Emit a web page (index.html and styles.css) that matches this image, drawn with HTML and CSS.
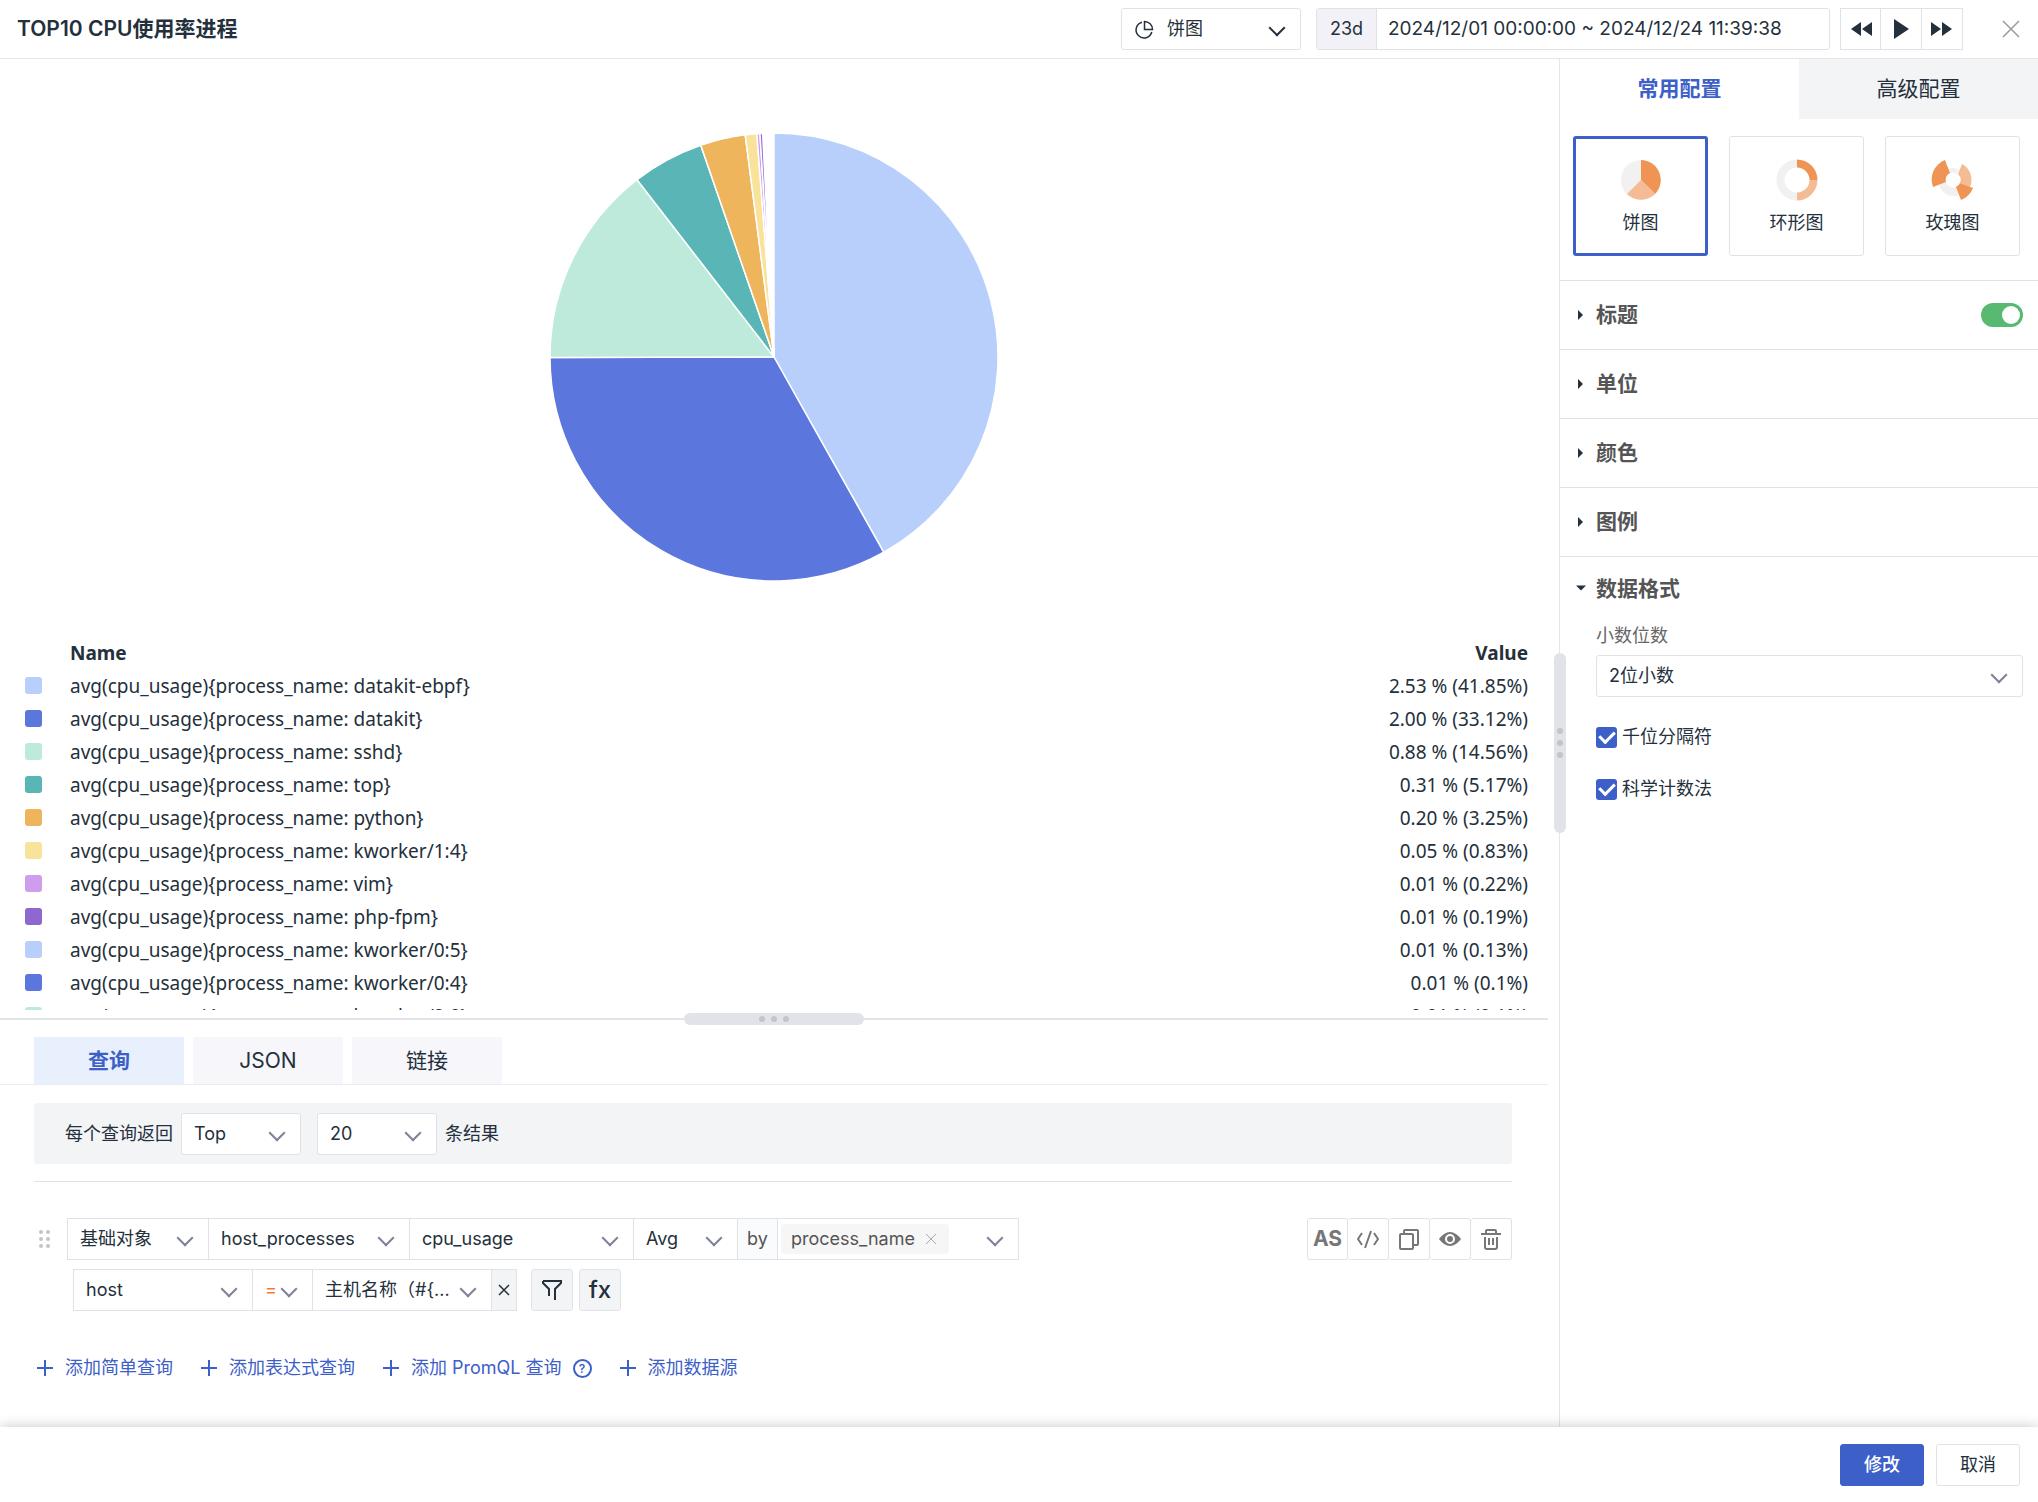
FILE: index.html
```html
<!doctype html>
<html lang="zh-CN">

<head>
    <meta charset="UTF-8" />
    <meta name="viewport" content="width=device-width, initial-scale=1.0" />
    <title>TOP10 CPU使用率进程</title>
    <link rel="stylesheet" href="styles.css">
</head>

<body>

    <header class="header">
        <h1>TOP10 CPU使用率进程</h1>
        <div class="select chart-select">
            <svg class="chart-icon" viewBox="0 0 20 20" width="20" height="20">
                <path d="M8 2.200a8 8 0 1 0 9.800 9.800M10.500 1.500v8h8a8 8 0 0 0-8-8z" />
            </svg>
            <select aria-label="图表类型">
                <option>饼图</option>
            </select>
        </div>
        <div class="time-range">
            <span>23d</span>
            <input type="text" aria-label="时间范围" value="2024/12/01 00:00:00 ~ 2024/12/24 11:39:38">
        </div>
        <div class="player">
            <button aria-label="后退"><svg viewBox="0 0 22 20" width="22" height="20"><path d="M11 3v14L1 10zM22 3v14l-10-7z" /></svg></button>
            <button aria-label="播放"><svg viewBox="0 0 22 20" width="22" height="20"><path d="M4 0l15 10L4 20z" /></svg></button>
            <button aria-label="前进"><svg viewBox="0 0 22 20" width="22" height="20"><path d="M0 3l10 7-10 7zM11 3l10 7-10 7z" /></svg></button>
        </div>
        <button class="close" aria-label="关闭"><svg viewBox="0 0 18 18" width="18" height="18"><path d="M1 1l16 16M17 1L1 17" /></svg></button>
    </header>

    <main class="main">
        <section class="left">
            <div class="chart">
                <svg id="pie" viewBox="-224 -224 448 448" width="448" height="448"></svg>
            </div>
            <div class="legend">
                <table>
                    <thead>
                        <tr><th></th><th>Name</th><th class="value">Value</th></tr>
                    </thead>
                    <tbody id="legend"></tbody>
                </table>
            </div>
            <div class="splitter">
                <div class="handle"><i></i><i></i><i></i></div>
            </div>

            <div class="tabs">
                <button class="active">查询</button>
                <button>JSON</button>
                <button>链接</button>
            </div>

            <div class="editor">
                <div class="limit">
                    <label for="order">每个查询返回</label>
                    <div class="select">
                        <select id="order"><option>Top</option><option>Bottom</option></select>
                    </div>
                    <div class="select">
                        <select id="count" aria-label="数量"><option>20</option><option>50</option></select>
                    </div>
                    <label for="count">条结果</label>
                </div>

                <div class="query">
                    <svg class="drag" viewBox="0 0 12 18" width="12" height="18">
                        <circle cx="2" cy="2" r="2" /><circle cx="9" cy="2" r="2" />
                        <circle cx="2" cy="9" r="2" /><circle cx="9" cy="9" r="2" />
                        <circle cx="2" cy="16" r="2" /><circle cx="9" cy="16" r="2" />
                    </svg>
                    <div class="group">
                        <div class="select source"><select aria-label="数据源"><option>基础对象</option></select></div>
                        <div class="select class-name"><select aria-label="分类"><option>host_processes</option></select></div>
                        <div class="select field"><select aria-label="字段"><option>cpu_usage</option></select></div>
                        <div class="select func"><select aria-label="函数"><option>Avg</option></select></div>
                        <span class="by">by</span>
                        <div class="select group-by">
                            <span class="tag">process_name
                                <button aria-label="移除"><svg viewBox="0 0 12 12" width="12" height="12"><path d="M1 1l10 10M11 1L1 11" /></svg></button>
                            </span>
                        </div>
                    </div>
                    <div class="tools">
                        <button class="as">AS</button>
                        <button aria-label="代码"><svg viewBox="0 0 24 24" width="24" height="24"><path d="M6 6l-4 6 4 6M18 6l4 6-4 6M15 4L9 21" /></svg></button>
                        <button aria-label="复制"><svg viewBox="0 0 24 24" width="24" height="24"><path d="M4 7h11a1 1 0 0 1 1 1v13a1 1 0 0 1-1 1H4a1 1 0 0 1-1-1V8a1 1 0 0 1 1-1zM7 7V4a1 1 0 0 1 1-1h12a1 1 0 0 1 1 1v13a1 1 0 0 1-1 1h-4" /></svg></button>
                        <button aria-label="隐藏"><svg viewBox="0 0 24 24" width="24" height="24"><path class="solid" d="M1 12c3-4 7-7 11-7s8 3 11 7c-3 4-7 7-11 7s-8-3-11-7z" /><circle class="ring" cx="12" cy="12" r="4" /></svg></button>
                        <button aria-label="删除"><svg viewBox="0 0 24 24" width="24" height="24"><path d="M2 7h20M7 7V4a1 1 0 0 1 1-1h8a1 1 0 0 1 1 1v3M6 10v10a2 2 0 0 0 2 2h8a2 2 0 0 0 2-2V10M10 11v7M14 11v7" /></svg></button>
                    </div>
                </div>

                <div class="filter">
                    <div class="group">
                        <div class="select key"><select aria-label="字段名"><option>host</option></select></div>
                        <div class="select operator"><select aria-label="运算符"><option>=</option><option>!=</option></select></div>
                        <div class="select val"><select aria-label="字段值"><option>主机名称（#{...</option></select></div>
                        <button class="remove" aria-label="移除条件"><svg viewBox="0 0 12 12" width="12" height="12"><path d="M1 1l10 10M11 1L1 11" /></svg></button>
                    </div>
                    <button class="square" aria-label="筛选"><svg viewBox="0 0 22 22" width="22" height="22"><path d="M2 2h18v2l-6 6v11M8 17v-7L2 4V2" /></svg></button>
                    <button class="square">fx</button>
                </div>

                <div class="adds">
                    <button><svg viewBox="0 0 18 18" width="18" height="18"><path d="M9 1v16M1 9h16" /></svg>添加简单查询</button>
                    <button><svg viewBox="0 0 18 18" width="18" height="18"><path d="M9 1v16M1 9h16" /></svg>添加表达式查询</button>
                    <button><svg viewBox="0 0 18 18" width="18" height="18"><path d="M9 1v16M1 9h16" /></svg>添加 PromQL 查询<span class="help">?</span></button>
                    <button><svg viewBox="0 0 18 18" width="18" height="18"><path d="M9 1v16M1 9h16" /></svg>添加数据源</button>
                </div>
            </div>
        </section>

        <aside class="right">
            <div class="handle vertical"><i></i><i></i><i></i></div>
            <div class="config-tabs">
                <button class="active">常用配置</button>
                <button>高级配置</button>
            </div>
            <div class="types">
                <button class="active">
                    <svg viewBox="-22 -22 44 44" width="44" height="44">
                        <circle r="20" fill="#f1f1f1" />
                        <path d="M0 0V-20A20 20 0 0 1 14 14z" fill="#ef9454" />
                        <path d="M0 0L14 14A20 20 0 0 1-14 14z" fill="#f5bb94" />
                    </svg>
                    饼图
                </button>
                <button>
                    <svg viewBox="-22 -22 44 44" width="44" height="44">
                        <path d="M0-20.500A20.500 20.500 0 0 0 0 20.500V12.500A12.500 12.500 0 0 1 0-12.500z" fill="#f1f1f1" />
                        <path d="M0-20.500A20.500 20.500 0 0 1 20.500 0H12.500A12.500 12.500 0 0 0 0-12.500z" fill="#ef9454" />
                        <path d="M20.500 0A20.500 20.500 0 0 1 0 20.500V12.500A12.500 12.500 0 0 0 12.500 0z" fill="#f5bb94" />
                    </svg>
                    环形图
                </button>
                <button>
                    <svg viewBox="-22 -22 44 44" width="44" height="44">
                        <path d="M-5-11A12 12 0 0 1 6-10L4-6A7 7 0 0 0-3-7z" fill="#f1f1f1" />
                        <path d="M-14 5A15 15 0 0 0 6 15L3 7A8 8 0 0 1-7 2z" fill="#f1f1f1" />
                        <path d="M-8-20A21 21 0 0 0-20 7L-7 2A8 8 0 0 1-3-7z" fill="#ef9454" />
                        <path d="M9-16A18 18 0 0 1 17 7L7 3A8 8 0 0 0 5-6z" fill="#f5bb94" />
                        <path d="M20 8A21 21 0 0 1 8 20L3 7A8 8 0 0 0 7 3z" fill="#ef9454" />
                    </svg>
                    玫瑰图
                </button>
            </div>

            <div class="fold">
                <h2>标题</h2>
                <input type="checkbox" class="toggle" aria-label="显示标题" checked>
            </div>
            <div class="fold"><h2>单位</h2></div>
            <div class="fold"><h2>颜色</h2></div>
            <div class="fold"><h2>图例</h2></div>
            <div class="fold open"><h2>数据格式</h2></div>
            <div class="format">
                <label class="format-label" for="decimals">小数位数</label>
                <div class="select">
                    <select id="decimals"><option>2位小数</option></select>
                </div>
                <label class="check"><input type="checkbox" checked>千位分隔符</label>
                <label class="check"><input type="checkbox" checked>科学计数法</label>
            </div>
        </aside>
    </main>

    <footer class="footer">
        <button class="primary">修改</button>
        <button>取消</button>
    </footer>

    <script>
        const colors = ["#b8cefb", "#5b76dd", "#bdeadb", "#5ab5b6", "#eeb55c", "#f9e29a", "#cf9cee", "#8e67d1"];

        // [process, value, percent]
        const rows = [
            ["datakit-ebpf", "2.53", 41.85],
            ["datakit", "2.00", 33.12],
            ["sshd", "0.88", 14.56],
            ["top", "0.31", 5.17],
            ["python", "0.20", 3.25],
            ["kworker/1:4", "0.05", 0.83],
            ["vim", "0.01", 0.22],
            ["php-fpm", "0.01", 0.19],
            ["kworker/0:5", "0.01", 0.13],
            ["kworker/0:4", "0.01", 0.1],
            ["kworker/2:0", "0.01", 0.1]
        ];

        const legend = document.getElementById("legend");
        const pie = document.getElementById("pie");
        const r = 224;
        let angle = 0;

        rows.forEach(function (row, i) {
            const color = colors[i % colors.length];
            legend.insertAdjacentHTML("beforeend", `<tr><td><span class="swatch" style="background: ${color}"></span></td><td>avg(cpu_usage){process_name: ${row[0]}}</td><td class="value">${row[1]} % (${row[2]}%)</td></tr>`);

            const end = angle + row[2] / 100 * Math.PI * 2;
            // slices thinner than the white border are not visible
            if (row[2] > 0.15) {
                const x1 = r * Math.sin(angle), y1 = -r * Math.cos(angle);
                const x2 = r * Math.sin(end), y2 = -r * Math.cos(end);
                pie.insertAdjacentHTML("beforeend", `<path d="M0 0L${x1} ${y1}A${r} ${r} 0 0 1 ${x2} ${y2}z" fill="${color}" />`);
            }
            angle = end;
        });
    </script>
</body>

</html>
```
FILE: styles.css
```css
* {
    box-sizing: border-box;
}

body {
    margin: 0;
    height: 100vh;
    display: flex;
    flex-direction: column;
    background: #fff;
    color: #24303b;
    font-family: Inter, "Noto Sans CJK SC", sans-serif;
    font-size: 18px;
    line-height: 24px;
}

button,
input,
select {
    margin: 0;
    font: inherit;
    color: inherit;
}

button {
    display: flex;
    align-items: center;
    justify-content: center;
    padding: 0;
    border: 1px solid #e1e2e7;
    border-radius: 3px;
    background: #fff;
    cursor: pointer;
}

svg {
    display: block;
    flex: none;
}

/* select with a chevron */
.select {
    position: relative;
    height: 42px;
    border: 1px solid #e1e2e7;
    border-radius: 3px;
    background: #fff;
}

.select select {
    width: 100%;
    height: 100%;
    padding: 0 36px 0 12px;
    border: none;
    background: none;
    appearance: none;
}

.select::after {
    content: "";
    position: absolute;
    right: 17px;
    top: 13px;
    width: 10px;
    height: 10px;
    border: solid #7e8296;
    border-width: 0 2px 2px 0;
    transform: rotate(45deg);
    pointer-events: none;
}

/* header */
.header {
    display: flex;
    align-items: center;
    height: 59px;
    padding: 0 18px 0 17px;
    border-bottom: 1px solid #e6e6ea;
}

h1 {
    flex: 1;
    margin: 0;
    font-size: 21px;
    font-weight: 600;
}

.chart-select {
    width: 180px;
    margin-right: 15px;
}

.chart-select::after {
    border-color: #24303b;
}

.chart-select select {
    padding-left: 45px;
}

.chart-icon {
    position: absolute;
    left: 12px;
    top: 11px;
    fill: none;
    stroke: #24303b;
    stroke-width: 1.5;
}

.time-range {
    display: flex;
    width: 514px;
    height: 42px;
    margin-right: 10px;
    border: 1px solid #e1e2e7;
    border-radius: 3px;
}

.time-range span {
    width: 60px;
    line-height: 40px;
    text-align: center;
    background: #f2f1f7;
    border-right: 1px solid #e1e2e7;
}

.time-range input {
    flex: 1;
    min-width: 0;
    padding: 0 11px;
    border: none;
    background: none;
    font-size: 19px;
}

.player {
    display: flex;
    margin-right: 39px;
}

.player button {
    width: 41px;
    height: 42px;
    border-radius: 0;
    fill: #24303b;
}

.player button + button {
    border-left: none;
}

.close {
    border: none;
    stroke: #999;
    stroke-width: 1.5;
}

/* main */
.main {
    flex: 1;
    display: flex;
    min-height: 0;
}

.left {
    flex: 1;
    display: flex;
    flex-direction: column;
    min-width: 0;
    padding-right: 11px;
}

.chart {
    flex: 1;
    display: flex;
    align-items: center;
    justify-content: center;
    min-height: 0;
    padding-top: 18px;
}

#pie {
    overflow: visible;
}

#pie path {
    stroke: #fff;
    stroke-width: 1.5;
    stroke-linejoin: bevel;
}

.legend {
    height: 374px;
    margin-bottom: 8px;
    padding: 0 20px 0 25px;
    overflow: hidden;
    font-family: "Noto Sans", sans-serif;
    font-size: 19px;
}

.legend table {
    width: 100%;
    border-collapse: collapse;
}

.legend th,
.legend td {
    height: 33px;
    padding: 0;
    text-align: left;
}

.legend th {
    font-weight: 700;
}

.legend th:first-child {
    width: 45px;
}

.legend .value {
    text-align: right;
}

.swatch {
    display: block;
    width: 17px;
    height: 17px;
    border-radius: 3px;
}

.splitter {
    position: relative;
    height: 2px;
    background: #e2e3e9;
}

.handle {
    position: absolute;
    left: 50%;
    top: -5px;
    z-index: 1;
    display: flex;
    align-items: center;
    justify-content: center;
    gap: 6px;
    width: 180px;
    height: 12px;
    border-radius: 6px;
    background: #e2e3e9;
    transform: translateX(-50%);
}

.handle i {
    width: 6px;
    height: 6px;
    border-radius: 50%;
    background: #c4c4c6;
}

.handle.vertical {
    left: -6px;
    top: 594px;
    flex-direction: column;
    width: 12px;
    height: 180px;
    transform: none;
}

.tabs {
    display: flex;
    gap: 9px;
    padding: 17px 34px 0;
    border-bottom: 1px solid #ececf0;
}

.tabs button {
    width: 150px;
    height: 47px;
    border: none;
    border-radius: 0;
    background: #f6f6fb;
    font-size: 21px;
}

.tabs .active {
    background: #e8effd;
    color: #3d60c8;
    font-weight: 600;
}

.editor {
    padding: 18px 36px 47px 34px;
}

.limit {
    display: flex;
    align-items: center;
    height: 61px;
    margin-bottom: 17px;
    padding-left: 31px;
    border-radius: 3px;
    background: #f3f4f6;
}

.limit .select {
    width: 120px;
    margin: 0 8px;
}

.query {
    display: flex;
    align-items: center;
    padding: 36px 0 9px;
    border-top: 1px solid #e1e2e7;
}

.drag {
    margin: 0 16px 0 5px;
    fill: #c4c4c8;
}

.group {
    display: flex;
    height: 42px;
    border: 1px solid #e1e2e7;
}

.group .select {
    height: 40px;
    border-width: 0 1px 0 0;
    border-radius: 0;
}

.group .select:last-child {
    border-right: none;
}

.source {
    width: 141px;
}

.class-name {
    width: 201px;
}

.field {
    width: 224px;
}

.func {
    width: 104px;
}

.by {
    width: 40px;
    border-right: 1px solid #e1e2e7;
    background: #fafbfd;
    color: #555;
    line-height: 40px;
    text-align: center;
}

.group-by {
    width: 240px;
    padding: 5px 3px;
}

.tag {
    display: flex;
    align-items: center;
    width: 168px;
    height: 30px;
    padding-left: 10px;
    border-radius: 4px;
    background: #f6f6f6;
    color: #555;
}

.tag button {
    margin-left: 10px;
    border: none;
    background: none;
    stroke: #aaa;
}

.tools {
    display: flex;
    margin-left: auto;
    color: #777;
}

.tools button {
    width: 41px;
    height: 42px;
    fill: none;
    stroke: #777;
    stroke-width: 2;
    stroke-linejoin: round;
}

.tools button + button {
    border-left: none;
}

.tools .as {
    font-size: 21px;
    font-weight: 700;
}

.tools .solid {
    fill: #777;
    stroke: none;
}

.tools .ring {
    fill: #777;
    stroke: #fff;
}

.filter {
    display: flex;
    gap: 6px;
    padding-left: 39px;
}

.filter .group {
    margin-right: 8px;
}

.key {
    width: 179px;
}

.operator {
    width: 60px;
    color: #ef7b32;
}

.operator select {
    padding-right: 0;
}

.val {
    width: 179px;
}

.remove {
    width: 24px;
    border: none;
    border-radius: 0;
    background: #f3f4f6;
    stroke: #24303b;
    stroke-width: 1.5;
}

.square {
    width: 42px;
    height: 42px;
    background: #f3f4f6;
    font-size: 24px;
    font-weight: 500;
    fill: none;
    stroke: #24303b;
    stroke-width: 2;
}

.adds {
    display: flex;
    gap: 27px;
    margin-top: 45px;
    padding-left: 2px;
}

.adds button {
    gap: 11px;
    border: none;
    color: #3d60c8;
    stroke: #3d60c8;
    stroke-width: 2;
}

.help {
    width: 19px;
    height: 19px;
    border: 2px solid #3d60c8;
    border-radius: 50%;
    font-size: 12px;
    font-weight: 600;
    line-height: 15px;
}

/* right panel */
.right {
    position: relative;
    width: 479px;
    border-left: 1px solid #e6e6ea;
}

.config-tabs {
    display: flex;
}

.config-tabs button {
    flex: 1;
    height: 60px;
    border: none;
    border-radius: 0;
    background: #f3f4f6;
    font-size: 21px;
}

.config-tabs .active {
    background: #fff;
    color: #3d60c8;
    font-weight: 600;
}

.types {
    display: grid;
    grid-template-columns: repeat(3, 1fr);
    gap: 21px;
    padding: 17px 18px 24px 13px;
}

.types button {
    flex-direction: column;
    gap: 9px;
    height: 120px;
}

.types .active {
    border: 3px solid #3d60c8;
}

.fold {
    display: flex;
    align-items: center;
    justify-content: space-between;
    height: 69px;
    padding: 0 15px 0 18px;
    border-top: 1px solid #e1e2e7;
    color: #555;
}

.fold.open {
    height: 64px;
}

.fold h2 {
    display: flex;
    align-items: center;
    margin: 0;
    font-size: 21px;
    font-weight: 600;
}

.fold h2::before {
    content: "";
    width: 18px;
    height: 10px;
    background: #24303b;
    clip-path: polygon(0 0, 5px 5px, 0 10px);
}

.fold.open h2::before {
    width: 20px;
    margin-left: -2px;
    clip-path: polygon(0 2px, 10px 2px, 5px 7px);
}

.toggle {
    appearance: none;
    width: 42px;
    height: 24px;
    padding: 3px;
    border-radius: 12px;
    background: #58ba72;
}

.toggle::before {
    content: "";
    display: block;
    width: 18px;
    height: 18px;
    margin-left: auto;
    border-radius: 50%;
    background: #fff;
}

.format {
    padding: 4px 15px 0 36px;
}

.format-label {
    display: block;
    margin-bottom: 7px;
    color: #666;
}

.check {
    display: flex;
    align-items: center;
    gap: 5px;
    height: 24px;
    margin-top: 28px;
}

.check input {
    appearance: none;
    display: grid;
    place-items: center;
    width: 21px;
    height: 21px;
    border-radius: 3px;
    background: #3d60c8;
}

.check input::before {
    content: "";
    width: 7px;
    height: 12px;
    margin-bottom: 3px;
    border: solid #fff;
    border-width: 0 3px 3px 0;
    transform: rotate(45deg);
}

/* footer */
.footer {
    position: relative;
    z-index: 2;
    display: flex;
    justify-content: flex-end;
    gap: 12px;
    height: 75px;
    padding: 17px 18px;
    background: #fff;
    box-shadow: 0 -1px 12px rgba(0, 0, 0, 0.2);
}

.footer button {
    width: 84px;
    height: 42px;
}

.footer .primary {
    border-color: #3d60c8;
    background: #3d60c8;
    color: #fff;
    font-weight: 500;
}
```
